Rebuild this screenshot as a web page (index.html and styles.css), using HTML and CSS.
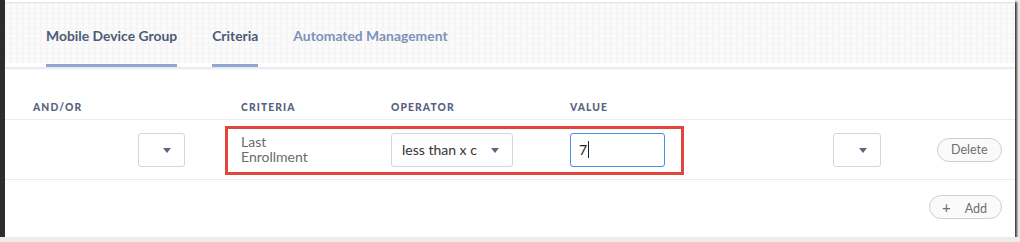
FILE: index.html
```html
<!DOCTYPE html>
<html lang="en">
<head>
    <meta charset="UTF-8">
    <title>Smart Group Criteria</title>
    <link rel="stylesheet" href="styles.css">
</head>
<body>
    <div class="frame">
        <!-- Pestañas -->
        <div class="tabs">
            <div class="tab active">Mobile Device Group</div>
            <div class="tab active">Criteria</div>
            <div class="tab muted">Automated Management</div>
        </div>

        <div class="grid head">
            <div>AND/OR</div>
            <div>CRITERIA</div>
            <div>OPERATOR</div>
            <div>VALUE</div>
            <div></div>
            <div></div>
        </div>

        <div class="grid row">
            <div><div class="select small first"><span class="caret"></span></div></div>
            <div class="criteria">Last<br>Enrollment</div>
            <div><div class="select wide">less than x c<span class="caret"></span></div></div>
            <div><div class="input">7<span class="cursor"></span></div></div>
            <div><div class="select small"><span class="caret"></span></div></div>
            <div><button class="pill">Delete</button></div>
            <div class="highlight"></div>
        </div>

        <div class="footer">
            <button class="pill add"><span class="plus">+</span>Add</button>
        </div>
    </div>
</body>
</html>
```

FILE: styles.css
```css
body {
    margin: 0;
    background: #ececec;
    font-family: Lato, 'Open Sans', sans-serif;
}

.frame {
    width: 1010px;
    height: 237px;
    background: white;
    border-left: 5px solid #2d2d2d;
    box-shadow: 2px 2px 2px rgba(0, 0, 0, 0.75);
    overflow: hidden;
}

/* Cabecera con textura */
.tabs {
    display: flex;
    gap: 35px;
    height: 60px;
    margin-top: 2px;
    padding-left: 41px;
    border-top: 1px solid #e4e4e4;
    border-bottom: 4px solid white;
    background-color: #f5f5f5;
    background-image: radial-gradient(circle at 3px 3px, #fbfbfb 2px, transparent 2.5px);
    background-size: 6px 5px;
    box-shadow: 0 2px 2px #e6e6ef;
    margin-bottom: 1px;
}

.tab {
    display: flex;
    align-items: center;
    padding-top: 4px;
    font-size: 13.9px;
    font-weight: 700;
    color: #7d92b8;
    border-bottom: 3px solid transparent;
    margin-bottom: -4px;
}

.tab.active {
    color: #4d5b78;
    border-bottom-color: #92a9cf;
}

.grid {
    display: grid;
    grid-template-columns: 208px 150px 179px 263px 104px 65px;
    padding-left: 28px;
}

.head {
    height: 50px;
    margin-top: 3px;
    align-items: end;
    padding-bottom: 6px;
    box-sizing: border-box;
    font-size: 10.3px;
    font-weight: 900;
    letter-spacing: 1.1px;
    color: #566280;
    border-bottom: 1px solid #ebebeb;
}

.row {
    position: relative;
    height: 59px;
    align-items: center;
    border-bottom: 1px solid #ebebeb;
}

.select {
    position: relative;
    box-sizing: border-box;
    height: 34px;
    border: 1px solid #d3d6dd;
    border-radius: 3px;
    font-size: 14px;
    color: #333;
    display: flex;
    align-items: center;
}

.select.small {
    width: 48px;
}

.select.first {
    margin-left: 105px;
    width: 47px;
}

.select.wide {
    width: 122px;
    padding-left: 10px;
}

.caret {
    position: absolute;
    right: 13px;
    top: 14px;
    border-left: 4px solid transparent;
    border-right: 4px solid transparent;
    border-top: 5px solid #5a6785;
}

.criteria {
    font-size: 14px;
    line-height: 15px;
    color: #6b6b6b;
    padding-bottom: 2px;
}

.input {
    box-sizing: border-box;
    width: 95px;
    height: 34px;
    border: 1px solid #4a90e2;
    border-radius: 3px;
    padding-left: 8px;
    font-size: 14px;
    color: #222;
    display: flex;
    align-items: center;
}

.cursor {
    width: 1px;
    height: 17px;
    background: #222;
    margin-left: 1px;
}

.pill {
    box-sizing: border-box;
    height: 24px;
    padding: 0 13px;
    border: 1px solid #cfcfcf;
    border-radius: 12px;
    background: #fafafa;
    font-family: inherit;
    font-size: 12.5px;
    color: #707070;
}

/* Recuadro rojo de la anotación */
.highlight {
    position: absolute;
    left: 220px;
    top: 6px;
    width: 459px;
    height: 49px;
    box-sizing: border-box;
    border: 3px solid #e2453c;
}

.footer {
    display: flex;
    justify-content: flex-end;
    padding: 15px 13px 0 0;
}

.pill.add {
    padding: 0 14px 0 12px;
}

.plus {
    font-size: 15px;
    margin-right: 14px;
}
```
